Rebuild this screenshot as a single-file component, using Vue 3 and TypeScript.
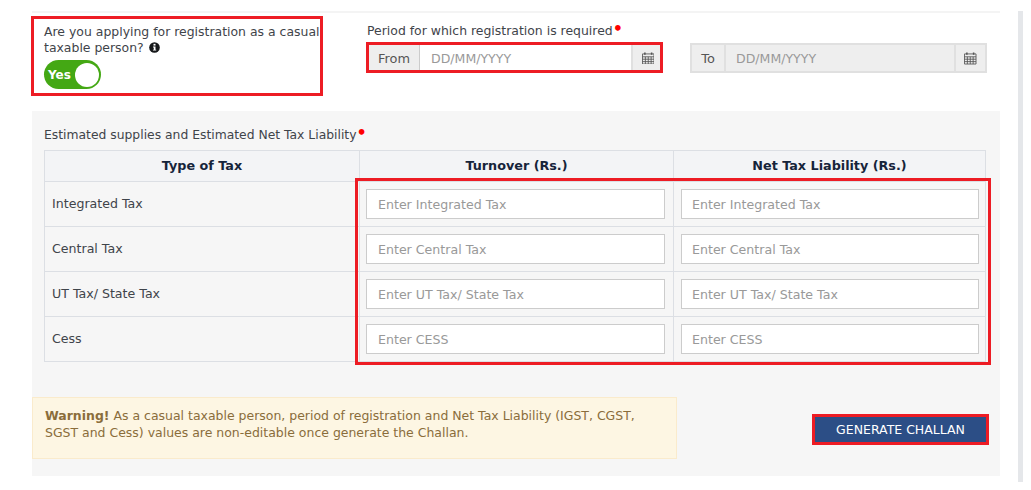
<script setup lang="ts">
const rows: { label: string; hint: string }[] = [
  { label: 'Integrated Tax', hint: 'Enter Integrated Tax' },
  { label: 'Central Tax', hint: 'Enter Central Tax' },
  { label: 'UT Tax/ State Tax', hint: 'Enter UT Tax/ State Tax' },
  { label: 'Cess', hint: 'Enter CESS' },
]
</script>

<template>
  <div class="page">
    <main class="main">
      <section class="top">
        <div class="question">
          <p class="q-text">
            Are you applying for registration as a casual taxable person?
            <svg class="info" viewBox="0 0 12 12" aria-hidden="true">
              <circle cx="6" cy="6" r="5.8" fill="#16181a" />
              <rect x="4.9" y="2" width="2.2" height="1.9" fill="#fff" />
              <path d="M4.4 5h2.7v3.4h.8v1H4.3v-1h.9V6h-.8z" fill="#fff" />
            </svg>
          </p>
          <div class="toggle"><span class="yes">Yes</span><span class="knob"></span></div>
        </div>
        <div class="period">
          <div class="period-label">Period for which registration is required<span class="req">•</span></div>
          <div class="dates">
            <div class="date from">
              <span class="addon addon-l">From</span>
              <input class="date-input" type="text" placeholder="DD/MM/YYYY" />
              <span class="addon addon-r">
                <svg class="cal" viewBox="0 0 13 13" aria-hidden="true">
                  <path d="M3 .5v2.4M10 .5v2.4" stroke="#555" stroke-width="1.6" fill="none" />
                  <path d="M.5 2h12v10.5H.5zM.5 5h12M.5 7.5h12M.5 10h12M3.5 5v7.5M6.5 5v7.5M9.5 5v7.5" stroke="#555" stroke-width=".9" fill="none" />
                </svg>
              </span>
            </div>
            <div class="date to">
              <span class="addon addon-l">To</span>
              <input class="date-input" type="text" placeholder="DD/MM/YYYY" disabled />
              <span class="addon addon-r">
                <svg class="cal" viewBox="0 0 13 13" aria-hidden="true">
                  <path d="M3 .5v2.4M10 .5v2.4" stroke="#555" stroke-width="1.6" fill="none" />
                  <path d="M.5 2h12v10.5H.5zM.5 5h12M.5 7.5h12M.5 10h12M3.5 5v7.5M6.5 5v7.5M9.5 5v7.5" stroke="#555" stroke-width=".9" fill="none" />
                </svg>
              </span>
            </div>
          </div>
        </div>
      </section>

      <section class="panel">
        <div class="panel-label">Estimated supplies and Estimated Net Tax Liability<span class="req">•</span></div>
        <div class="table-wrap">
          <table class="tax">
            <thead>
              <tr>
                <th>Type of Tax</th>
                <th>Turnover (Rs.)</th>
                <th>Net Tax Liability (Rs.)</th>
              </tr>
            </thead>
            <tbody>
              <tr v-for="row in rows" :key="row.label">
                <td class="name"><span>{{ row.label }}</span></td>
                <td class="field"><input type="text" :placeholder="row.hint" /></td>
                <td class="field"><input type="text" :placeholder="row.hint" /></td>
              </tr>
            </tbody>
          </table>
          <div class="highlight"></div>
        </div>
        <div class="footer">
          <div class="warning">
            <strong>Warning!</strong> As a casual taxable person, period of registration and Net Tax Liability (IGST, CGST, SGST and Cess) values are non-editable once generate the Challan.
          </div>
          <button class="generate" type="button">GENERATE CHALLAN</button>
        </div>
      </section>
    </main>
    <div class="side"></div>
  </div>
</template>

<style>
html, body { margin: 0; background: #fff; }
</style>

<style scoped>
.page {
  display: flex;
  align-items: flex-start;
  width: 1031px;
  height: 490px;
  box-sizing: border-box;
  padding: 11px 0 0 32px;
  overflow: hidden;
  font-family: "DejaVu Sans", sans-serif;
  font-size: 12.45px;
  color: #3f444a;
}
.main { width: 968px; flex: none; border-top: 2px solid #f4f4f4; }
.side { width: 5px; height: 471px; margin-left: 18px; background: #e5e7ea; }
.top { display: flex; height: 98px; padding-top: 3px; box-sizing: border-box; }
.question {
  flex: none;
  width: 292px;
  height: 80px;
  margin-left: -1px;
  box-sizing: border-box;
  border: 3px solid #ed1c24;
  padding: 5px 0 0 10px;
}
.q-text { margin: 0; line-height: 16px; width: 278px; }
.info { width: 11px; height: 11px; vertical-align: -1px; margin-left: 1px; }
.toggle {
  display: flex;
  align-items: center;
  justify-content: space-between;
  width: 57px;
  height: 29px;
  margin-top: 4px;
  padding: 0 2px 0 4px;
  box-sizing: border-box;
  border-radius: 15px;
  background: #44a814;
}
.yes { color: #fff; font-weight: 700; font-size: 12px; }
.knob { width: 24px; height: 24px; border-radius: 50%; background: #fff; }
.period { margin-left: 43px; flex: none; width: 621px; }
.period-label { padding: 7px 0 0 1px; line-height: 16px; height: 26px; box-sizing: border-box; }
.req {
  color: #f00;
  font-size: 16px;
  font-weight: 700;
  line-height: 0;
  vertical-align: 1px;
}
.dates { display: flex; align-items: flex-start; gap: 27px; }
.date { display: flex; flex: none; width: 297px; height: 31px; box-sizing: border-box; }
.from { border: 3px solid #ed1c24; }
.to { border: 2px solid #e0e0e0; margin-top: 1px; height: 30px; background: #eee; }
.addon {
  display: flex;
  align-items: center;
  justify-content: center;
  flex: none;
  padding-top: 1px;
  box-sizing: border-box;
  background: #eee;
  color: #555;
  font-size: 12.9px;
}
.from .addon-l { width: 51px; border-right: 1px solid #ccc; }
.to .addon-l { width: 34px; border-right: 2px solid #e0e0e0; }
.addon-r { width: 31px; border-left: 2px solid #e0e0e0; }
.from .addon-r { width: 29px; padding-left: 3px; }
.cal { width: 12.5px; height: 12.5px; }
.date-input {
  flex: 1;
  min-width: 0;
  border: 0;
  padding: 2px 0 0 11px;
  background: #fff;
  font: inherit;
  font-size: 12.55px;
  outline: none;
}
.to .date-input { padding-left: 10px; padding-top: 1px; }
.date-input:disabled { background: #eee; }
input::placeholder { color: #999; opacity: 1; }
.panel {
  height: 365px;
  box-sizing: border-box;
  padding: 15px 0 0 12px;
  background: #f6f6f6;
}
.panel-label { height: 24px; padding-top: 1px; box-sizing: border-box; line-height: 16px; font-size: 12.35px; }
.table-wrap { position: relative; width: 942px; }
.tax {
  width: 942px;
  table-layout: fixed;
  border-collapse: collapse;
}
.tax th, .tax td { border: 1px solid #dcdfe4; padding: 0; }
.tax th {
  height: 31px;
  padding-bottom: 2px;
  box-sizing: border-box;
  font-size: 12.75px;
  font-weight: 700;
  color: #16243a;
  background: #f3f4f6;
  text-align: center;
}
.tax th:first-child { width: 315px; }
.tax th:nth-child(2) { width: 314px; }
.tax td { height: 44px; }
.name {
  vertical-align: top;
  padding: 13px 0 0 7px !important;
  box-sizing: border-box;
  color: #3f444a;
  font-size: 12.6px;
  line-height: 17px;
}
.field input {
  display: block;
  width: 299px;
  height: 30px;
  margin: 0 0 0 6px;
  box-sizing: border-box;
  border: 1px solid #ccc;
  padding: 1px 0 0 11px;
  background: #fff;
  font: inherit;
  font-size: 12.6px;
  outline: none;
}
.field:last-child input { width: 298px; margin-left: 7px; padding-left: 10px; }
.highlight {
  position: absolute;
  left: 311px;
  top: 28px;
  width: 636px;
  height: 187px;
  box-sizing: border-box;
  border: 3px solid #ed1c24;
  pointer-events: none;
}
.footer {
  display: flex;
  justify-content: space-between;
  align-items: flex-start;
  margin: 35px 0 0 -12px;
  padding-right: 11px;
}
.warning {
  width: 645px;
  height: 62px;
  box-sizing: border-box;
  border: 1px solid #faebcc;
  padding: 9px 30px 0 12px;
  background: #fdf6e3;
  color: #8a6d3b;
  font-size: 12.48px;
  line-height: 17px;
}
.generate {
  width: 177px;
  height: 31px;
  margin-top: 17px;
  box-sizing: border-box;
  border: 3px solid #ed1c24;
  padding: 0;
  background: #2c4e86;
  color: #fff;
  font: inherit;
  font-size: 12.5px;
}
</style>
